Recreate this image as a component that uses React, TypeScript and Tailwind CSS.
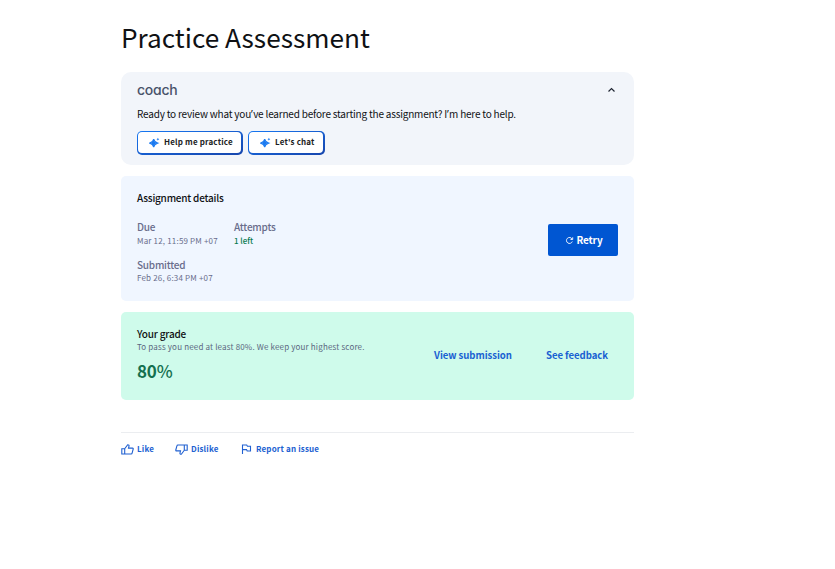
import type { ReactNode } from "react";

function Sparkle() {
  return (
    <svg width="11" height="11" viewBox="0 0 11 11" fill="#1b7af0" className="shrink-0">
      <path d="M4.700 2.200c.6 2.400 1.300 3.100 3.900 3.900-2.600.8-3.300 1.500-3.900 3.900-.6-2.400-1.300-3.100-3.900-3.900C3.400 5.300 4.100 4.600 4.700 2.200Z" stroke="#1b7af0" strokeWidth="1.1" />
      <path d="M8.900.8c.3 1 .5 1.200 1.500 1.500-1 .3-1.200.5-1.500 1.500-.3-1-.5-1.200-1.500-1.500 1-.3 1.200-.5 1.500-1.500Z" />
    </svg>
  );
}

function Thumb({ down = false }: { down?: boolean }) {
  return (
    <svg width="13" height="13" viewBox="0 0 13 13" fill="none" stroke="#2161d1" strokeWidth="1.1" className={down ? "shrink-0 rotate-180" : "shrink-0"}>
      <path d="M.8 5.800h2.900v5.200H.8ZM3.700 5.800l3-4.100c1.200 0 1.500.8 1.300 1.500l-.5 1.900h4.100c.5 0 .7.400.6.900l-1.100 4.100c-.1.600-.5.900-1 .9H3.700" />
    </svg>
  );
}

function Apostrophe() {
  return <span className="font-['Noto_Sans',sans-serif] tracking-[0.3px]">’</span>;
}

function CoachButton({ children, className }: { children: ReactNode; className: string }) {
  return (
    <button className={`h-6 rounded-[5px] bg-gradient-to-br from-[#1677f2] to-[#1746ad] pt-px pr-[2px] pb-[2px] pl-px ${className}`}>
      <span className="flex h-full items-center gap-1 rounded-[4px] bg-white pl-[11px] text-[8px] leading-3 font-bold tracking-[0.17px] whitespace-nowrap text-[#1b1d22]">
        <Sparkle />
        <span className="pb-px">{children}</span>
      </span>
    </button>
  );
}

export default function App() {
  return (
    <main className="h-[569px] w-[835px] overflow-hidden bg-white pt-[17px] pl-[121px] font-['Noto_Sans_CJK_SC','Noto_Sans',sans-serif] text-[#0f1114]">
      <div className="w-[513px]">
        <h1 className="h-[55px] text-[26.200px] leading-10 font-normal whitespace-nowrap">Practice Assessment</h1>

        <section className="h-[93px] rounded-[10px] bg-[#f2f5fa] px-4 pt-[9px]">
          <div className="flex h-[18px] items-center justify-between">
            <span className="font-[Inter,sans-serif] text-[14px] leading-[18px] font-medium tracking-[-0.25px] text-[#49536a] [font-feature-settings:'cv11']">coach</span>
            <svg width="13" height="10" viewBox="0 0 13 10" fill="none" stroke="#202633" strokeWidth="1.2"><path d="m3.500 6.500 3-3 3 3" /></svg>
          </div>
          <p className="mt-[7px] h-4 text-[10px] leading-4 tracking-[-0.2px] whitespace-nowrap">Ready to review what you<Apostrophe />ve learned before starting the assignment? I<Apostrophe />m here to help.</p>
          <div className="mt-[9px] flex gap-[5px]">
            <CoachButton className="w-[106px]">Help me practice</CoachButton>
            <CoachButton className="w-[77px]">Let's chat</CoachButton>
          </div>
        </section>

        <section className="mt-[11px] flex h-[125px] justify-between rounded-[5px] bg-[#f0f6ff] pt-[14px] pr-4 pl-4">
          <div>
            <h2 className="text-[10px] leading-4 font-medium tracking-[-0.22px]">Assignment details</h2>
            <div className="mt-[14px] grid grid-cols-[97px_90px] gap-y-[10px] whitespace-nowrap text-[#696d8c]">
              <div>
                <h3 className="text-[10px] leading-[14px] font-medium tracking-[-0.22px]">Due</h3>
                <p className="text-[8px] leading-[14px] tracking-[0.18px]">Mar 12, 11:59 PM +07</p>
              </div>
              <div>
                <h3 className="text-[10px] leading-[14px] font-medium tracking-[-0.22px]">Attempts</h3>
                <p className="text-[8px] leading-[14px] font-medium text-[#087a50]">1 left</p>
              </div>
              <div>
                <h3 className="text-[10px] leading-[14px] font-medium tracking-[-0.22px]">Submitted</h3>
                <p className="text-[8px] leading-3 tracking-[0.18px]">Feb 26, 6:34 PM +07</p>
              </div>
            </div>
          </div>
          <button className="mt-[34px] flex h-8 w-[70px] items-center justify-center gap-[3px] rounded-[2px] bg-[#0056d2] pb-px pl-px text-[10px] leading-[15px] font-bold tracking-[-0.2px] text-white">
            <svg width="9" height="9" viewBox="0 0 9 9" fill="none" stroke="white" strokeWidth=".9" className="mt-px"><path d="M7.100 3A3 3 0 1 0 7.300 5.500M7.700 1.300v2.200H5.500" /></svg>
            <span className="-mt-px">Retry</span>
          </button>
        </section>

        <section className="mt-[11px] flex h-[88px] rounded-[5px] bg-[#cffbeb] pt-[15px] pl-4">
          <div className="w-[297px] whitespace-nowrap">
            <h2 className="text-[10px] leading-[14px] font-medium tracking-[-0.2px]">Your grade</h2>
            <p className="text-[8px] leading-3 tracking-[0.17px] text-[#5b6780]">To pass you need at least 80%. We keep your highest score.</p>
            <p className="mt-[6px] text-[17px] leading-6 font-medium text-[#14704f]"><span className="font-bold tracking-[-0.2px]">80</span>%</p>
          </div>
          <div className="mt-[20px] flex h-4 text-[9.600px] leading-4 font-bold tracking-[-0.05px] whitespace-nowrap text-[#1961d2]">
            <a className="w-28">View submission</a>
            <a>See feedback</a>
          </div>
        </section>

        <footer className="mt-8 flex h-8 border-t border-[#ebedf0] pt-[9px] text-[8px] leading-[14px] font-bold tracking-[0.17px] whitespace-nowrap text-[#2161d1]">
          <a className="flex h-[14px] w-[54px] items-center gap-[3px]"><Thumb />Like</a>
          <a className="flex h-[14px] w-[66px] items-center gap-[3px]"><Thumb down />Dislike</a>
          <a className="flex h-[14px] items-center gap-[4px]">
            <svg width="11" height="12" viewBox="0 0 11 12" fill="none" stroke="#2161d1" strokeWidth="1.100"><path d="M1.500 11V2h4.200l.7 1.200h3.100v4.800H6.200l-.7-1.400h-4" /></svg>
            Report an issue
          </a>
        </footer>
      </div>
    </main>
  );
}
